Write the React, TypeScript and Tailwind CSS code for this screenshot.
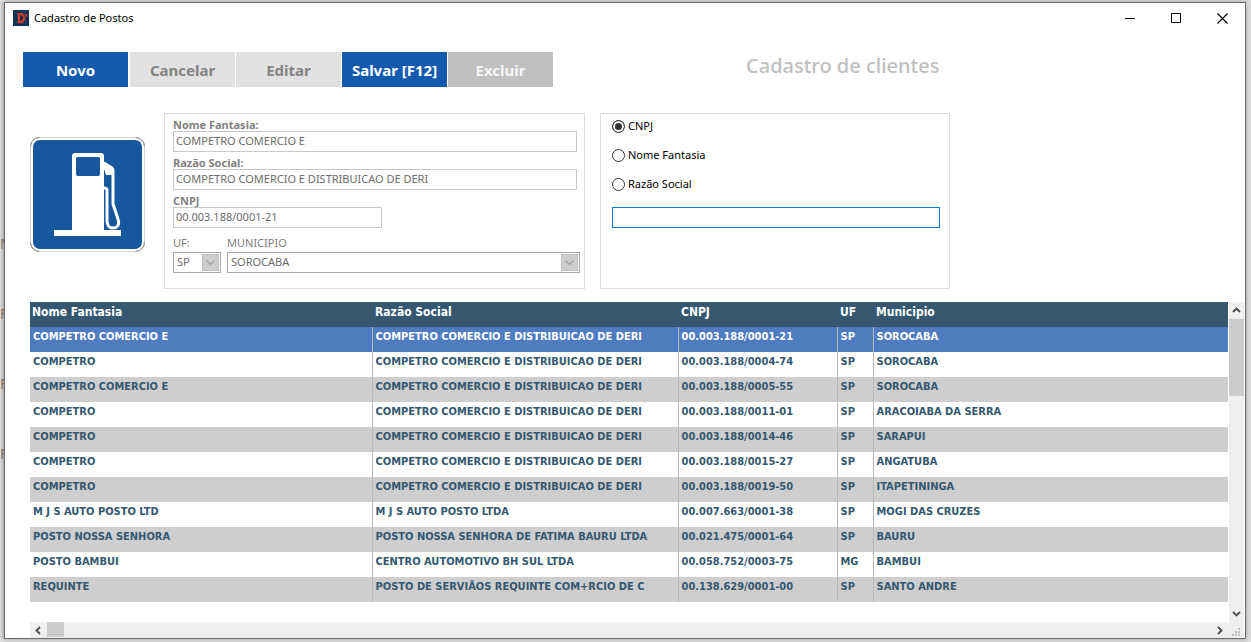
import { useState, type ReactNode } from "react";

type Posto = [string, string, string, string, string];

const COMPETRO = "COMPETRO COMERCIO E DISTRIBUICAO DE DERI";

const postos: Posto[] = [
  ["COMPETRO COMERCIO E", COMPETRO, "00.003.188/0001-21", "SP", "SOROCABA"],
  ["COMPETRO", COMPETRO, "00.003.188/0004-74", "SP", "SOROCABA"],
  ["COMPETRO COMERCIO E", COMPETRO, "00.003.188/0005-55", "SP", "SOROCABA"],
  ["COMPETRO", COMPETRO, "00.003.188/0011-01", "SP", "ARACOIABA DA SERRA"],
  ["COMPETRO", COMPETRO, "00.003.188/0014-46", "SP", "SARAPUI"],
  ["COMPETRO", COMPETRO, "00.003.188/0015-27", "SP", "ANGATUBA"],
  ["COMPETRO", COMPETRO, "00.003.188/0019-50", "SP", "ITAPETININGA"],
  ["M J S AUTO POSTO LTD", "M J S AUTO POSTO LTDA", "00.007.663/0001-38", "SP", "MOGI DAS CRUZES"],
  ["POSTO NOSSA SENHORA", "POSTO NOSSA SENHORA DE FATIMA BAURU LTDA", "00.021.475/0001-64", "SP", "BAURU"],
  ["POSTO BAMBUI", "CENTRO AUTOMOTIVO BH SUL LTDA", "00.058.752/0003-75", "MG", "BAMBUI"],
  ["REQUINTE", "POSTO DE SERVIÃOS REQUINTE COM+RCIO DE C", "00.138.629/0001-00", "SP", "SANTO ANDRE"],
];

const headers = ["Nome Fantasia", "Razão Social", "CNPJ", "UF", "Municipio"];

function AppIcon() {
  return (
    <svg width="16" height="16" viewBox="0 0 16 16" aria-hidden="true">
      <rect width="16" height="16" fill="#0f3556" />
      <path d="M4 3h5l3 3v4l-3 3H4v-1h1V4H4z" fill="#e8392f" />
      <path d="M7 5h1l2 2v2l-2 2H7z" fill="#102c48" />
      <path d="M12 4h2v3h-1V6h-1z" fill="#c9302a" />
    </svg>
  );
}

function FuelSign() {
  return (
    <svg className="shrink-0" width="115" height="115" viewBox="0 0 115 115" role="img" aria-label="Posto de combustível">
      <rect x="0.5" y="0.5" width="114" height="114" rx="9" fill="#fff" stroke="#d2d2d2" />
      <path d="M.5 9.500a9 9 0 0 1 9-9M105.500.5a9 9 0 0 1 9 9M114.500 105.500a9 9 0 0 1-9 9M9.500 114.500a9 9 0 0 1-9-9" fill="none" stroke="#888" />
      <rect x="3" y="3" width="109" height="109" rx="7" fill="#17579d" />
      <path d="M24 93h18V19q0-3 3-3h26q3 0 3 3v74h17v6H24z" fill="#fff" />
      <rect x="46" y="20" width="24" height="19" rx="2" fill="#17579d" />
      <path d="M74 26l8 5q1 1 1 3v33l5 15c2 6-1 9-5 9s-6-3-6-7V53q0-2-3-2" fill="none" stroke="#fff" strokeWidth="3" strokeLinejoin="round" />
      <path d="M74 25l9 6v7h-7l-2-6z" fill="#fff" />
    </svg>
  );
}

function Chevron({ turn }: { turn: "up" | "down" | "left" | "right" }) {
  const d = {
    up: "M1 6l3.500-3.500L8 6",
    down: "M1 3l3.500 3.500L8 3",
    left: "M6 1L2.500 4.500 6 8",
    right: "M3 1l3.500 3.500L3 8",
  }[turn];
  return (
    <svg width="9" height="9" viewBox="0 0 9 9" aria-hidden="true">
      <path d={d} fill="none" stroke="#505050" strokeWidth="1.900" />
    </svg>
  );
}

function WindowButton({ label, children }: { label: string; children: ReactNode }) {
  return (
    <button type="button" aria-label={label} className="flex h-7 w-[46px] items-center justify-center hover:bg-gray-200">
      <svg width="11" height="11" viewBox="0 0 11 11" fill="none" stroke="#000" aria-hidden="true">
        {children}
      </svg>
    </button>
  );
}

function Field({ id, label, value, width }: { id: string; label: string; value: string; width: string }) {
  return (
    <div>
      <label htmlFor={id} className="block h-[17px] pt-0.5 text-[11px] leading-[17px] font-bold text-[#808080]">
        {label}
      </label>
      <input
        id={id}
        disabled
        defaultValue={value}
        className={`block h-[21px] border border-[#c8c8c8] bg-white px-0.5 pb-0.5 text-[11px] text-[#6d6d6d] ${width}`}
      />
    </div>
  );
}

function Combo({ id, label, value, width }: { id: string; label: string; value: string; width: string }) {
  return (
    <div className={width}>
      <label htmlFor={id} className="block h-4 text-[11px] leading-[14px] text-[#808080]">
        {label}
      </label>
      <div className="relative">
        <select
          id={id}
          disabled
          defaultValue={value}
          className="block h-[21px] w-full appearance-none border border-[#a9a9a9] bg-white px-[3px] text-[11px] text-[#6d6d6d] opacity-100"
        >
          <option>{value}</option>
        </select>
        <span className="pointer-events-none absolute top-0.5 right-0.5 flex size-[17px] items-center justify-center border border-[#bfbfbf] bg-[#cccccc]">
          <svg width="9" height="5" viewBox="0 0 9 5" aria-hidden="true">
            <path d="M.5.5l4 4 4-4" fill="none" stroke="#a0a0a0" strokeWidth="1.200" />
          </svg>
        </span>
      </div>
    </div>
  );
}

export default function App() {
  const [filter, setFilter] = useState("CNPJ");
  const [selected, setSelected] = useState(0);
  const tool = "h-[35px] w-[105px] pt-px text-[15px] font-bold";

  return (
    <div className="flex min-h-screen bg-[#dedede] pt-0.5 pr-[5px] pb-[3px] font-['Noto_Sans',sans-serif]">
      <div aria-hidden="true" className="w-1 shrink-0 overflow-hidden bg-linear-to-r from-[#e2e2e2] to-[#c9c9c9] pt-[207px] text-sm leading-[70px] text-[#8a7a70]">
        <div>M</div>
        <div>F</div>
        <div>F</div>
        <div>F</div>
      </div>
      <main className="flex min-w-0 flex-1 flex-col border border-[#6b6b6b] bg-white shadow-[0_0_5px_rgba(0,0,0,0.3)]">
        <header className="flex h-[30px] items-center pl-2">
          <AppIcon />
          <h1 className="flex-1 pl-[5px] text-[11px] text-black">Cadastro de Postos</h1>
          <WindowButton label="Minimizar">
            <path d="M0 5.500h10" />
          </WindowButton>
          <WindowButton label="Maximizar">
            <path d="M.5.5h9v9h-9z" />
          </WindowButton>
          <WindowButton label="Fechar">
            <path d="M.5.5l10 10M10.500.5l-10 10" strokeWidth="1.200" />
          </WindowButton>
        </header>

        <div className="flex items-start pt-[19px] pl-[18px]">
          <div className="flex gap-0.5">
            <button type="button" className={`${tool} bg-[#1359ae] text-white`}>Novo</button>
            <div className="flex gap-px">
              <button type="button" disabled className={`${tool} bg-[#e1e1e1] text-[#838383]`}>Cancelar</button>
              <button type="button" disabled className={`${tool} bg-[#e1e1e1] text-[#838383]`}>Editar</button>
              <button type="button" className={`${tool} bg-[#1359ae] text-white`}>Salvar [F12]</button>
              <button type="button" disabled className={`${tool} bg-[#c0c0c0] text-[#f6f6f6]`}>Excluir</button>
            </div>
          </div>
          <h2 className="pl-[193px] text-xl leading-7 font-medium text-[#c0c0c0]">Cadastro de clientes</h2>
        </div>

        <div className="flex items-start pt-[26px] pl-[25px]">
          <div className="pt-6 pr-[19px]">
            <FuelSign />
          </div>
          <section className="h-44 w-[421px] border border-[#dcdcdc] pr-1 pl-2">
            <Field id="fantasia" label="Nome Fantasia:" value="COMPETRO COMERCIO E" width="w-[404px]" />
            <Field id="razao" label="Razão Social:" value={COMPETRO} width="w-[404px]" />
            <Field id="cnpj" label="CNPJ" value="00.003.188/0001-21" width="w-[209px]" />
            <div className="flex gap-1.5 pt-2">
              <Combo id="uf" label="UF:" value="SP" width="w-12" />
              <Combo id="municipio" label="MUNICIPIO" value="SOROCABA" width="flex-1" />
            </div>
          </section>
          <section className="ml-[15px] h-44 w-[350px] border border-[#dcdcdc] pt-1 pr-[9px] pl-[11px]">
            <fieldset className="flex flex-col gap-[13px]">
              {["CNPJ", "Nome Fantasia", "Razão Social"].map((name) => (
                <label key={name} className="flex h-4 items-center gap-[3px] text-[11px] text-black">
                  <input
                    type="radio"
                    name="filtro"
                    checked={filter === name}
                    onChange={() => setFilter(name)}
                    className="size-[13px] appearance-none rounded-full border border-[#333] bg-white checked:bg-[#333] checked:shadow-[inset_0_0_0_2px_white]"
                  />
                  {name}
                </label>
              ))}
            </fieldset>
            <input aria-label="Pesquisar" className="mt-[15px] block h-[21px] w-full border border-[#0078d7] bg-white px-0.5 text-[11px] outline-none" />
          </section>
        </div>

        <div className="flex flex-1 flex-col pt-[13px] pr-px pl-[25px]">
          <div className="flex flex-1">
            <div className="min-w-0 flex-1">
              <table className="w-full table-fixed border-collapse text-left font-['DejaVu_Sans_Condensed','DejaVu_Sans',sans-serif] text-[11px] leading-5 font-bold text-[#34576f]">
                <colgroup>
                  <col className="w-[342px]" />
                  <col className="w-[306px]" />
                  <col className="w-[159px]" />
                  <col className="w-9" />
                  <col />
                </colgroup>
                <thead>
                  <tr className="h-[25px] bg-[#355870] text-xs leading-5 text-white">
                    {headers.map((h) => (
                      <th key={h} scope="col" className="py-0 pl-[3px] align-top first:pl-0.5">{h}</th>
                    ))}
                  </tr>
                </thead>
                <tbody>
                  {postos.map((row, i) => (
                    <tr
                      key={row[2]}
                      onClick={() => setSelected(i)}
                      className={`h-[25px] ${i === selected ? "bg-[#4f7bbf] text-white" : i % 2 ? "bg-white" : "bg-[#cecece]"}`}
                    >
                      {row.map((cell, c) => (
                        <td key={c} className="overflow-hidden border-l border-[#b9b9b9] py-0 pl-[3px] align-top whitespace-nowrap first:border-l-0">
                          {cell}
                        </td>
                      ))}
                    </tr>
                  ))}
                </tbody>
              </table>
            </div>
            <div className="ml-px flex w-[15px] flex-col bg-[#efefef]">
              <button type="button" aria-label="Rolar para cima" className="flex h-[17px] items-center justify-center"><Chevron turn="up" /></button>
              <div className="h-[77px] bg-[#cbcbcb]" />
              <div className="flex-1" />
              <button type="button" aria-label="Rolar para baixo" className="flex h-[17px] items-center justify-center"><Chevron turn="down" /></button>
            </div>
          </div>
          <div className="flex h-4 bg-[#efefef]">
            <button type="button" aria-label="Rolar para a esquerda" className="flex w-[17px] items-center justify-center"><Chevron turn="left" /></button>
            <div className="mb-px w-[17px] bg-[#cbcbcb]" />
            <div className="flex-1" />
            <button type="button" aria-label="Rolar para a direita" className="flex w-[17px] items-center justify-center"><Chevron turn="right" /></button>
            <svg className="ml-[3px] self-end" width="13" height="13" viewBox="0 0 13 13" fill="#bdbdbd" aria-hidden="true">
              <path d="M7 3h2v2H7zM7 6h2v2H7zM4 6h2v2H4zM7 9h2v2H7zM4 9h2v2H4zM1 9h2v2H1z" />
            </svg>
          </div>
        </div>
      </main>
    </div>
  );
}
